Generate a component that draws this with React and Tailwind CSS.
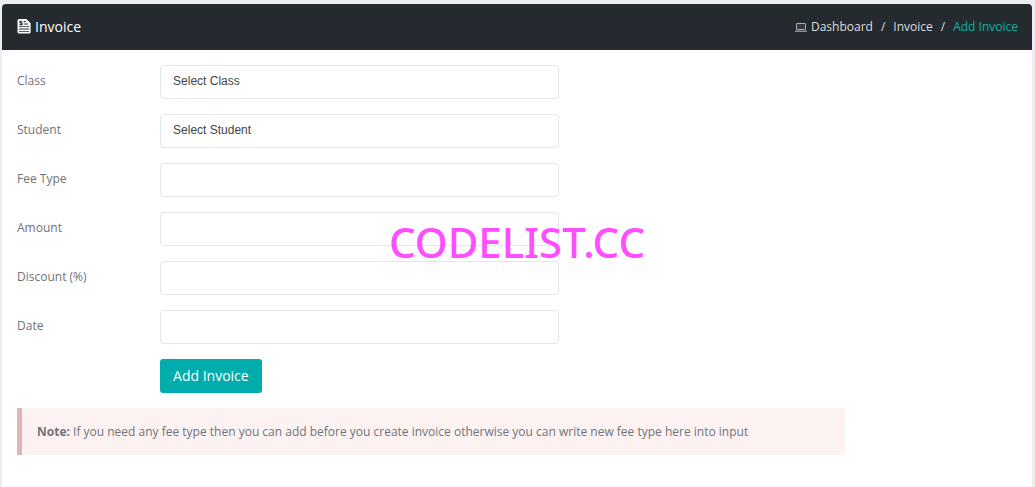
import React from "react";

const fields = [
  { id: "class", label: "Class", options: ["Select Class"] },
  { id: "student", label: "Student", options: ["Select Student"] },
  { id: "feetype", label: "Fee Type" },
  { id: "amount", label: "Amount" },
  { id: "discount", label: "Discount (%)" },
  { id: "date", label: "Date" },
];

const control =
  "block h-[34px] w-full appearance-none rounded border border-[#e2e7eb] bg-white px-3 pb-0.5 font-['Liberation_Sans',Arial,sans-serif] text-[12px] text-[#444] outline-none focus:border-[#00acac]";

function InvoiceIcon() {
  return (
    <svg viewBox="0 0 14 15" className="h-[15px] w-[14px]" aria-hidden="true">
      <path
        fill="#fff"
        fillRule="evenodd"
        d="M2 0h7.4L13.6 4.2V13Q13.6 14.4 12.2 14.4H2Q.5 14.4 .5 13V1.5Q.5 0 2 0ZM2 7.3V8.1H12.2V7.3ZM2 9.6V10.4H12.2V9.6ZM2 11.9V12.8H12.2V11.9ZM6.6 2V3H9V2ZM6.6 4.5V5.4H11V4.5Z"
      />
      <path d="M5.2 2.2H3V3.9H4.9V5.6H2.6" fill="none" stroke="#242a30" strokeWidth="1.1" />
    </svg>
  );
}

function LaptopIcon() {
  return (
    <svg viewBox="0 0 12 9" className="h-[9px] w-[12px]" aria-hidden="true">
      <rect x="1.5" y=".5" width="9" height="6" rx=".5" fill="#33393f" stroke="#a9abad" />
      <path d="M0 8.2H12" stroke="#a9abad" strokeWidth="1.2" />
    </svg>
  );
}

export default function App() {
  return (
    <div className="min-h-screen bg-[#edecf2] pt-1 pr-[3px] pl-0.5 font-['Open_Sans','Noto_Sans',sans-serif] text-[12px] text-[#707478]">
      <main className="relative flex min-h-[calc(100vh-4px)] flex-col rounded-t bg-white">
        <header className="flex h-[46px] items-center justify-between rounded-t bg-[#242a30] pr-[14px] pl-[15px] text-white">
          <h1 className="flex items-center gap-1 pb-0.5 text-[14px] font-medium">
            <InvoiceIcon />
            Invoice
          </h1>
          <nav aria-label="Breadcrumb">
            <ol className="flex items-center gap-2 font-medium text-[#dddddd]">
              <li>
                <a href="#dashboard" className="flex items-center gap-1">
                  <LaptopIcon />
                  Dashboard
                </a>
              </li>
              <li aria-hidden="true">/</li>
              <li>
                <a href="#invoice">Invoice</a>
              </li>
              <li aria-hidden="true">/</li>
              <li className="text-[#12afa8]">Add Invoice</li>
            </ol>
          </nav>
        </header>

        <div className="w-10/12 py-[15px]">
          <form className="flex flex-col gap-[15px]" onSubmit={(e) => e.preventDefault()}>
            {fields.map((f) => (
              <div key={f.id} className="flex">
                <label htmlFor={f.id} className="w-1/6 px-[15px] pt-[7px] leading-[18px]">
                  {f.label}
                </label>
                <div className="w-1/2 px-[15px]">
                  {f.options ? (
                    <select id={f.id} className={control}>
                      {f.options.map((o) => (
                        <option key={o}>{o}</option>
                      ))}
                    </select>
                  ) : (
                    <input id={f.id} type="text" className={control} />
                  )}
                </div>
              </div>
            ))}
            <div className="ml-[16.6667%] px-[15px]">
              <button
                type="submit"
                className="h-[34px] rounded-[3px] bg-[#00acac] px-[13px] pb-0.5 text-[14px] font-medium text-white"
              >
                Add Invoice
              </button>
            </div>
          </form>
          <p className="mx-[15px] mt-[15px] border-l-[5px] border-[#dfb5b4] bg-[#fcf2f2] px-[15px] py-[14px] leading-[19px]">
            <strong>Note:</strong> If you need any fee type then you can add before you create
            invoice otherwise you can write new fee type here into input
          </p>
        </div>

        <div className="pointer-events-none absolute inset-x-0 top-[208px] text-center font-['Noto_Sans',sans-serif] text-[42px] leading-[60px] font-medium text-[#ff4dff]">
          CODELIST.CC
        </div>
      </main>
    </div>
  );
}
